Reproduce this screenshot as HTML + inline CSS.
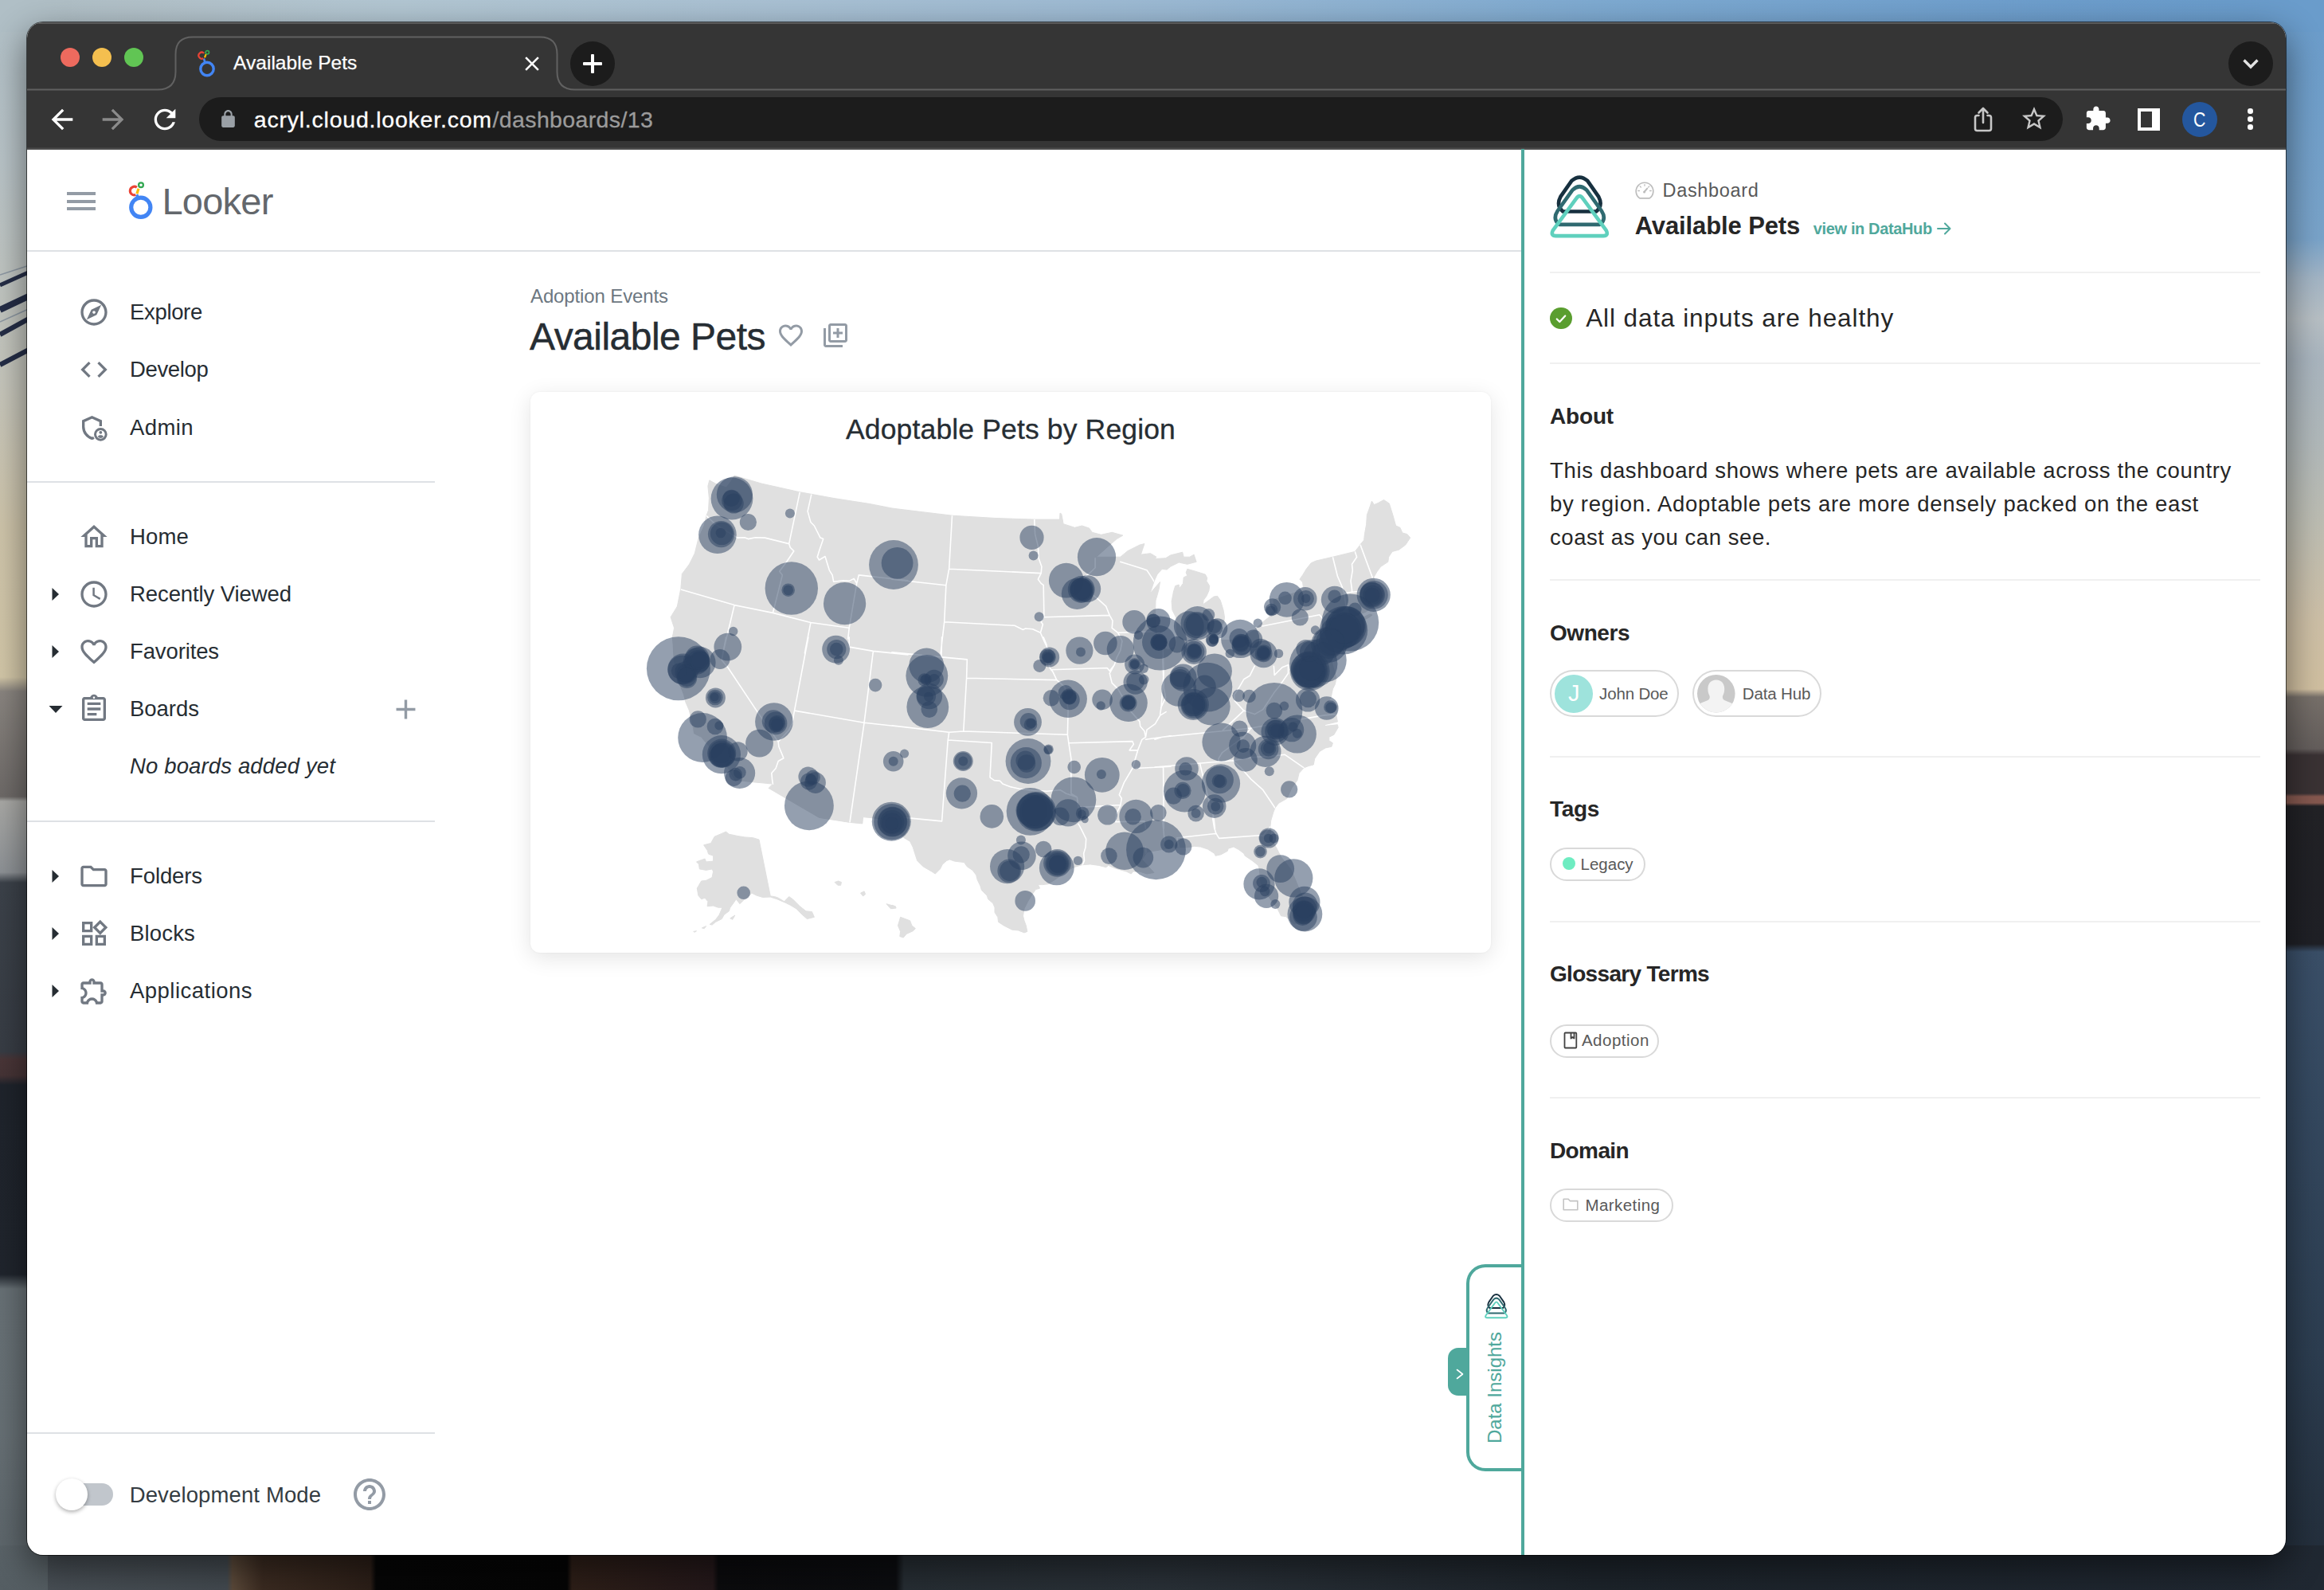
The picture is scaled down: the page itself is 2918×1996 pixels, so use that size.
<!DOCTYPE html>
<html lang="en"><head><meta charset="utf-8"><title>Available Pets</title>
<style>
*{box-sizing:border-box}
html,body{margin:0;padding:0}
body{width:2918px;height:1996px;overflow:hidden;position:relative;background:#3b4650;font-family:"Liberation Sans",sans-serif}
.t{position:absolute;white-space:nowrap;line-height:1;font-family:"Liberation Sans",sans-serif}
.i{position:absolute;display:block;overflow:visible}
.a{position:absolute}
#win{position:absolute;left:34px;top:28px;width:2836px;height:1924px;border-radius:20px;background:#fff;overflow:hidden}
#pg{position:absolute;left:-34px;top:-28px;width:2918px;height:1996px}

.hl{position:absolute;height:2px;background:#dee1e5}
.pl{position:absolute;height:2px;background:#f0f0f0}
.pill{position:absolute;border:2px solid #d9d9d9;border-radius:40px;background:#fff}
#t1{letter-spacing:0.042px}
#t2{letter-spacing:0.775px}
#t3{letter-spacing:0.358px}
#t5{letter-spacing:-0.786px}
#t6{letter-spacing:-0.336px}
#t7{letter-spacing:-0.344px}
#t8{letter-spacing:0.409px}
#t9{letter-spacing:0.160px}
#t10{letter-spacing:-0.090px}
#t11{letter-spacing:-0.122px}
#t12{letter-spacing:-0.023px}
#t13{letter-spacing:-0.100px}
#t14{letter-spacing:0.167px}
#t15{letter-spacing:0.475px}
#t16{letter-spacing:0.141px}
#t17{letter-spacing:0.127px}
#t18{letter-spacing:-0.120px}
#t19{letter-spacing:-0.522px}
#t20{letter-spacing:0.145px}
#t21{letter-spacing:0.670px}
#t22{letter-spacing:-0.113px}
#t23{letter-spacing:-0.366px}
#t24{letter-spacing:0.908px}
#t25{letter-spacing:-0.172px}
#t26{letter-spacing:0.668px}
#t27{letter-spacing:0.729px}
#t28{letter-spacing:0.571px}
#t29{letter-spacing:-0.451px}
#t31{letter-spacing:-0.158px}
#t32{letter-spacing:-0.139px}
#t33{letter-spacing:-0.320px}
#t34{letter-spacing:-0.018px}
#t35{letter-spacing:-0.685px}
#t36{letter-spacing:0.508px}
#t37{letter-spacing:-0.615px}
#t38{letter-spacing:0.443px}

</style></head>
<body>

<div class="a" style="left:0;top:0;width:2918px;height:80px;background:linear-gradient(90deg,#b4c2c9 0.00%,#b2c6d2 17.14%,#a8c0d3 34.27%,#9bb9d3 50.03%,#7eaad1 68.54%,#6f9fcd 85.68%,#699bca 100.00%)"></div>
<div class="a" style="left:0;top:0;width:90px;height:1996px;background:linear-gradient(180deg,#b0bfc6 0.00%,#b9c4c8 10.02%,#c6c6bc 24.05%,#cfc5ab 33.07%,#d3c7a8 42.59%,#8a8580 43.49%,#6e6a68 50.10%,#a9a9a6 50.40%,#8e9296 54.86%,#3c424a 55.51%,#383d45 66.13%,#4a3638 66.63%,#463436 67.64%,#1f242c 68.24%,#20252d 80.16%,#687176 81.06%,#677075 90.18%,#5a6368 100.00%)"></div>
<div class="a" style="left:0;top:0;width:400px;height:40px;background:linear-gradient(90deg,#b0bfc6 0%,#b0bfc6 10%,rgba(178,194,202,0) 100%)"></div>
<svg class="i" style="left:0;top:320px" width="40" height="160" viewBox="0 320 40 160" fill="none" stroke="#252e47" stroke-linecap="butt"><path d="M0 358 L40 340" stroke-width="5"/><path d="M0 389 L40 370" stroke-width="8"/><path d="M0 420 L40 398" stroke-width="6"/><path d="M0 458 L40 437" stroke-width="6"/><path d="M0 345 L40 332 M0 404 L40 386" stroke="#8d98a3" stroke-width="1.500"/></svg>
<div class="a" style="left:2830px;top:0;width:88px;height:1996px;background:linear-gradient(180deg,#6a9ccb 0.00%,#79a3c9 15.03%,#a3b5c5 17.54%,#b7bfc4 20.04%,#a9b5bf 22.55%,#b0b8ba 27.56%,#bdbdb2 33.07%,#cdbfa6 39.08%,#d0bfa0 43.34%,#77706a 43.84%,#645e5c 47.09%,#3a3234 47.49%,#3a3234 49.90%,#85584f 50.10%,#85584f 50.50%,#222226 50.70%,#1f2026 59.37%,#3a4f68 59.87%,#34485f 70.14%,#2c3d50 85.17%,#222c38 100.00%)"></div>
<div class="a" style="left:2500px;top:0;width:418px;height:40px;background:linear-gradient(90deg,rgba(106,156,203,0) 0%,#6a9ccb 85%)"></div>
<div class="a" style="left:0;top:1940px;width:2918px;height:56px;background:linear-gradient(90deg,#4a5157 0.00%,#434a50 9.77%,#5c4a3a 10.01%,#3b2b21 11.31%,#2c1f18 15.94%,#060606 16.18%,#050505 24.40%,#2e1f18 24.61%,#24181a 30.67%,#0b0b0d 30.91%,#0c0d10 38.55%,#272e34 38.90%,#2a3138 50.03%,#1d242b 68.54%,#202832 100.00%)"></div>
<div class="a" style="left:0;top:1940px;width:60px;height:56px;background:linear-gradient(180deg,#5a6368,#555e63)"></div>
<div class="a" style="left:34px;top:28px;width:2836px;height:1924px;border-radius:20px;box-shadow:0 0 0 1px rgba(0,0,0,.6),0 16px 44px 2px rgba(0,0,0,.48)"></div>

<div id="win"><div id="pg">
<div class="a" style="left:34px;top:28px;width:2836px;height:160px;background:#353535"></div>
<div class="a" style="left:34px;top:28px;width:2836px;height:2px;background:#5e5e5e;opacity:.9"></div>
<svg class="i" style="left:34px;top:28px" width="2836" height="90" viewBox="34 28 2836 90" fill="none" stroke="#616161" stroke-width="2">
<path d="M34 112.5 H198 Q220.5 112.5 220.5 90 V68 Q220.5 46.5 242 46.5 H678 Q699.500 46.5 699.500 68 V90 Q699.500 112.500 722 112.500 H2870"/></svg>
<div class="a" style="left:76px;top:60px;width:24px;height:24px;border-radius:50%;background:#ed6a5e"></div>
<div class="a" style="left:116px;top:60px;width:24px;height:24px;border-radius:50%;background:#f4bf4f"></div>
<div class="a" style="left:156px;top:60px;width:24px;height:24px;border-radius:50%;background:#61c554"></div>
<svg class="i" style="left:246px;top:62px" width="28" height="36" viewBox="0 0 28 36" fill="none">
<circle cx="14" cy="24.500" r="8.200" stroke="#4285f4" stroke-width="3.400"/>
<path d="M11.600 16.500 L9.800 11.500" stroke="#4285f4" stroke-width="2.600"/>
<path d="M9.300 11.200 A4 4 0 1 1 10.200 4.800" stroke="#ea4335" stroke-width="2.200"/>
<circle cx="14.300" cy="3.800" r="2.200" stroke="#34a853" stroke-width="1.700"/>
<path d="M12.600 6.200 L11 10.400" stroke="#fbbc04" stroke-width="2.200"/>
</svg>
<div id="t1" class="t " style="left:293.0px;top:67.3px;font-size:24.5px;color:#ffffff;-webkit-text-stroke:.25px #fff;">Available Pets</div>
<svg class="i" style="left:653.0px;top:65.3px" width="30" height="30" viewBox="0 0 24 24" fill="#ffffff" ><path d="M19 6.41L17.59 5 12 10.59 6.41 5 5 6.41 10.59 12 5 17.59 6.41 19 12 13.41 17.59 19 19 17.59 13.41 12z"/></svg>
<div class="a" style="left:715.500px;top:52px;width:56px;height:56px;border-radius:50%;background:#1c1c1c"></div>
<div class="a" style="left:731.500px;top:78px;width:24px;height:4px;border-radius:1px;background:#fff"></div>
<div class="a" style="left:741.500px;top:68px;width:4px;height:24px;border-radius:1px;background:#fff"></div>
<div class="a" style="left:2798px;top:52px;width:56px;height:56px;border-radius:50%;background:#1c1c1c"></div>
<svg class="i" style="left:2814px;top:70px" width="24" height="20" viewBox="0 0 24 20" fill="none" stroke="#e3e3e3" stroke-width="3.400"><path d="M3.500 5.500 L12 14 L20.500 5.500"/></svg>
<svg class="i" style="left:58.0px;top:129.5px" width="40" height="40" viewBox="0 0 24 24" fill="#ffffff" ><path d="M20 11H7.83l5.59-5.59L12 4l-8 8 8 8 1.41-1.41L7.83 13H20v-2z"/></svg>
<svg class="i" style="left:122.0px;top:129.5px" width="40" height="40" viewBox="0 0 24 24" fill="#8b8b8b" ><path d="M12 4l-1.41 1.41L16.17 11H4v2h12.170l-5.580 5.590L12 20l8-8z"/></svg>
<svg class="i" style="left:186.5px;top:129.5px" width="40" height="40" viewBox="0 0 24 24" fill="#ffffff" ><path d="M17.65 6.35C16.2 4.9 14.21 4 12 4c-4.42 0-7.99 3.58-7.990 8s3.570 8 7.990 8c3.730 0 6.840-2.550 7.730-6h-2.080c-.82 2.330-3.040 4-5.650 4-3.310 0-6-2.690-6-6s2.690-6 6-6c1.660 0 3.140.69 4.220 1.780L13 11h7V4l-2.350 2.350z"/></svg>
<div class="a" style="left:250px;top:122px;width:2340px;height:55px;border-radius:28px;background:#1c1c1c"></div>
<svg class="i" style="left:273.5px;top:137.0px" width="25" height="25" viewBox="0 0 24 24" fill="#9aa0a6" ><path d="M18 8h-1V6c0-2.760-2.240-5-5-5S7 3.240 7 6v2H6c-1.100 0-2 .9-2 2v10c0 1.100.9 2 2 2h12c1.100 0 2-.9 2-2V10c0-1.100-.9-2-2-2zM9 6c0-1.660 1.340-3 3-3s3 1.340 3 3v2H9V6z"/></svg>
<div id="t2" class="t " style="left:318.8px;top:136.2px;font-size:28.5px;color:#ffffff;-webkit-text-stroke:.3px #fff;">acryl.cloud.looker.com</div>
<div id="t3" class="t " style="left:618.6px;top:136.2px;font-size:28.5px;color:#9b9b9b;-webkit-text-stroke:.3px #9b9b9b;">/dashboards/13</div>
<svg class="i" style="left:2474px;top:130px" width="32" height="40" viewBox="0 0 32 40" fill="none" stroke="#c7c7c7" stroke-width="2.600" stroke-linecap="round" stroke-linejoin="round">
<path d="M10.500 15 H8.500 Q6 15 6 17.500 V31.500 Q6 34 8.500 34 H23.500 Q26 34 26 31.500 V17.500 Q26 15 23.500 15 H21.500"/><path d="M16 24 V6.500 M10.500 11.500 L16 6 L21.500 11.500"/></svg>
<svg class="i" style="left:2535.8px;top:131.0px" width="36" height="36" viewBox="0 0 24 24" fill="#c7c7c7" ><path d="M22 9.24l-7.19-.62L12 2 9.19 8.63 2 9.24l5.46 4.73L5.82 21 12 17.27 18.18 21l-1.63-7.03L22 9.24zM12 15.4l-3.76 2.27 1-4.28-3.32-2.88 4.38-.38L12 6.1l1.71 4.04 4.38.38-3.320 2.880 1 4.280L12 15.400z"/></svg>
<svg class="i" style="left:2617.0px;top:132.0px" width="34" height="34" viewBox="0 0 24 24" fill="#ffffff" ><path d="M20.5 11H19V7c0-1.1-.9-2-2-2h-4V3.5C13 2.12 11.88 1 10.5 1S8 2.12 8 3.500V5H4c-1.100 0-1.990.9-1.990 2v3.800H3.500c1.490 0 2.700 1.210 2.700 2.700s-1.210 2.700-2.700 2.700H2V20c0 1.100.9 2 2 2h3.800v-1.500c0-1.490 1.210-2.700 2.700-2.700 1.490 0 2.700 1.210 2.700 2.700V22H17c1.100 0 2-.9 2-2v-4h1.500c1.380 0 2.500-1.120 2.500-2.500S21.880 11 20.500 11z"/></svg>
<div class="a" style="left:2684px;top:135.500px;width:28px;height:28px;background:#fff"></div>
<div class="a" style="left:2688px;top:139.500px;width:14px;height:20px;background:#353535"></div>
<div class="a" style="left:2740px;top:127.500px;width:44px;height:44px;border-radius:50%;background:#24579e"></div>
<div id="t4" class="t " style="left:2753.6px;top:137.4px;font-size:26px;color:#ffffff;transform:scaleX(.82);transform-origin:0 50%;">C</div>
<div class="a" style="left:2822.300px;top:136.3px;width:6.500px;height:6.500px;border-radius:50%;background:#fff"></div>
<div class="a" style="left:2822.300px;top:146.3px;width:6.500px;height:6.500px;border-radius:50%;background:#fff"></div>
<div class="a" style="left:2822.300px;top:156.3px;width:6.500px;height:6.500px;border-radius:50%;background:#fff"></div>
<div class="a" style="left:34px;top:185px;width:2836px;height:3px;background:linear-gradient(180deg,#3c3c3c,#5a5a5a)"></div>
<div class="a" style="left:84px;top:241px;width:36px;height:4px;background:#939ba5"></div>
<div class="a" style="left:84px;top:250.5px;width:36px;height:4px;background:#939ba5"></div>
<div class="a" style="left:84px;top:260px;width:36px;height:4px;background:#939ba5"></div>
<svg class="i" style="left:158px;top:225px" width="38" height="54" viewBox="158 225 38 54" fill="none">
<circle cx="176.800" cy="260.300" r="12.100" stroke="#4285f4" stroke-width="5.200"/>
<path d="M173.700 248.800 L171.600 244.200" stroke="#4285f4" stroke-width="3.600"/>
<path d="M170.300 244.600 A5.300 5.300 0 1 1 171.800 235.300" stroke="#ea4335" stroke-width="3.200"/>
<circle cx="177" cy="232.200" r="2.900" stroke="#34a853" stroke-width="2.300"/>
<path d="M174 236.800 L171.900 243.300" stroke="#fbbc04" stroke-width="3.200"/>
</svg>
<div id="t5" class="t " style="left:203.5px;top:228.7px;font-size:47px;color:#63676c;">Looker</div>
<div class="hl" style="left:34px;top:314px;width:1876px"></div>
<div class="hl" style="left:34px;top:604px;width:512px"></div>
<div class="hl" style="left:34px;top:1030px;width:512px"></div>
<div class="hl" style="left:34px;top:1798px;width:512px"></div>
<svg class="i" style="left:98.0px;top:371.5px" width="40" height="40" viewBox="0 0 24 24" fill="#717882" ><path d="M12 2C6.48 2 2 6.48 2 12s4.48 10 10 10 10-4.48 10-10S17.52 2 12 2zm0 18c-4.41 0-8-3.59-8-8s3.59-8 8-8 8 3.59 8 8-3.59 8-8 8zm-5.5-2.500l7.510-3.490L17.500 6.500 9.990 9.990 6.500 17.500zm5.500-6.600c.61 0 1.100.49 1.100 1.100s-.49 1.100-1.100 1.100-1.100-.49-1.100-1.100.49-1.100 1.100-1.100z"/></svg>
<div id="t6" class="t " style="left:163.0px;top:377.8px;font-size:27.5px;color:#262d33;">Explore</div>
<svg class="i" style="left:98.0px;top:444.0px" width="40" height="40" viewBox="0 0 24 24" fill="#717882" ><path d="M9.4 16.6L4.8 12l4.600-4.600L8 6l-6 6 6 6 1.400-1.400zm5.200 0l4.600-4.600-4.600-4.600L16 6l6 6-6 6-1.400-1.400z"/></svg>
<div id="t7" class="t " style="left:163.0px;top:450.3px;font-size:27.5px;color:#262d33;">Develop</div>
<svg class="i" style="left:98px;top:516.5px" width="40" height="40" viewBox="0 0 24 24" fill="#717882"><path d="M17 10.800 V7 L10.500 4.100 L4 7 V11.200 C4 15.200 6.700 18.900 10.500 20 C11 19.850 11.500 19.650 11.950 19.400" fill="none" stroke="#717882" stroke-width="2" stroke-linejoin="miter"/><circle cx="17" cy="17" r="4.100" fill="#fff" stroke="#717882" stroke-width="1.800"/><circle cx="17" cy="15.500" r="1.150"/><path d="M14.800 18.600c.5-.9 1.500-1.100 2.200-1.100s1.700.2 2.200 1.100c-.5.700-1.300 1.150-2.200 1.150s-1.700-.45-2.200-1.150z"/></svg>
<div id="t8" class="t " style="left:163.0px;top:522.8px;font-size:27.5px;color:#262d33;">Admin</div>
<svg class="i" style="left:98.0px;top:653.5px" width="40" height="40" viewBox="0 0 24 24" fill="#717882" ><path d="M12 5.69l5 4.500V18h-2v-6H9v6H7v-7.810l5-4.500M12 3L2 12h3v8h6v-6h2v6h6v-8h3L12 3z"/></svg>
<div id="t9" class="t " style="left:163.0px;top:659.8px;font-size:27.5px;color:#262d33;">Home</div>
<svg class="i" style="left:98.0px;top:726.0px" width="40" height="40" viewBox="0 0 24 24" fill="#717882" ><path d="M11.99 2C6.47 2 2 6.48 2 12s4.470 10 9.990 10C17.520 22 22 17.520 22 12S17.520 2 11.990 2zM12 20c-4.420 0-8-3.580-8-8s3.580-8 8-8 8 3.580 8 8-3.580 8-8 8zm.5-13H11v6l5.250 3.150.75-1.230-4.500-2.670z"/></svg>
<div id="t10" class="t " style="left:163.0px;top:732.3px;font-size:27.5px;color:#262d33;">Recently Viewed</div>
<svg class="i" style="left:64px;top:737px" width="12" height="18" viewBox="0 0 12 18" fill="#262d33"><path d="M1.500 1 L10 9 L1.500 17z"/></svg>
<svg class="i" style="left:98.0px;top:798.0px" width="40" height="40" viewBox="0 0 24 24" fill="#717882" ><path d="M16.5 3c-1.740 0-3.410.81-4.500 2.090C10.910 3.810 9.240 3 7.500 3 4.420 3 2 5.420 2 8.500c0 3.780 3.400 6.860 8.550 11.540L12 21.350l1.450-1.320C18.600 15.360 22 12.280 22 8.500 22 5.420 19.580 3 16.500 3zm-4.400 15.550l-.1.1-.1-.1C7.140 14.240 4 11.390 4 8.500 4 6.500 5.500 5 7.500 5c1.540 0 3.040.99 3.570 2.360h1.870C13.460 5.990 14.960 5 16.500 5c2 0 3.500 1.500 3.500 3.500 0 2.890-3.140 5.740-7.900 10.050z"/></svg>
<div id="t11" class="t " style="left:163.0px;top:804.3px;font-size:27.5px;color:#262d33;">Favorites</div>
<svg class="i" style="left:64px;top:809px" width="12" height="18" viewBox="0 0 12 18" fill="#262d33"><path d="M1.500 1 L10 9 L1.500 17z"/></svg>
<svg class="i" style="left:98.0px;top:870.0px" width="40" height="40" viewBox="0 0 24 24" fill="#717882" ><path d="M7 15h7v2H7zm0-4h10v2H7zm0-4h10v2H7zm12-4h-4.180C14.400 1.840 13.300 1 12 1c-1.300 0-2.400.84-2.820 2H5c-.14 0-.27.01-.4.04-.39.08-.74.28-1.010.55-.18.18-.33.4-.43.64-.1.23-.16.49-.16.77v14c0 .27.06.54.16.78s.25.45.43.64c.27.27.62.47 1.010.55.13.02.26.03.4.03h14c1.100 0 2-.9 2-2V5c0-1.100-.9-2-2-2zm-7-.25c.41 0 .75.34.75.75s-.34.75-.75.75-.75-.34-.75-.75.34-.75.75-.75zM19 19H5V5h14v14z"/></svg>
<div id="t12" class="t " style="left:163.0px;top:876.3px;font-size:27.5px;color:#262d33;">Boards</div>
<svg class="i" style="left:61px;top:885px" width="18" height="11" viewBox="0 0 18 11" fill="#262d33"><path d="M0.500 1 L17.500 1 L9 10z"/></svg>
<svg class="i" style="left:98.0px;top:1080.0px" width="40" height="40" viewBox="0 0 24 24" fill="#717882" ><path d="M9.17 6l2 2H20v10H4V6h5.170M10 4H4c-1.100 0-1.990.9-1.990 2L2 18c0 1.100.9 2 2 2h16c1.100 0 2-.9 2-2V8c0-1.100-.9-2-2-2h-8l-2-2z"/></svg>
<div id="t13" class="t " style="left:163.0px;top:1086.3px;font-size:27.5px;color:#262d33;">Folders</div>
<svg class="i" style="left:64px;top:1091px" width="12" height="18" viewBox="0 0 12 18" fill="#262d33"><path d="M1.500 1 L10 9 L1.500 17z"/></svg>
<svg class="i" style="left:98.0px;top:1152.0px" width="40" height="40" viewBox="0 0 24 24" fill="#717882" ><path d="M16.66 4.52l2.830 2.830-2.830 2.830-2.830-2.830 2.830-2.830M9 5v4H5V5h4m10 10v4h-4v-4h4M9 15v4H5v-4h4m7.660-13.310L11 7.340 16.660 13l5.660-5.660-5.660-5.650zM11 3H3v8h8V3zm10 10h-8v8h8v-8zm-10 0H3v8h8v-8z"/></svg>
<div id="t14" class="t " style="left:163.0px;top:1158.3px;font-size:27.5px;color:#262d33;">Blocks</div>
<svg class="i" style="left:64px;top:1163px" width="12" height="18" viewBox="0 0 12 18" fill="#262d33"><path d="M1.500 1 L10 9 L1.500 17z"/></svg>
<svg class="i" style="left:98.0px;top:1224.0px" width="40" height="40" viewBox="0 0 24 24" fill="#717882" ><path d="M10.5 4.5c.28 0 .5.22.5.5v2h6v6h2c.28 0 .5.22.5.5s-.22.5-.5.5h-2v6h-2.120c-.68-1.750-2.390-3-4.380-3s-3.700 1.250-4.380 3H4v-2.120c1.750-.68 3-2.390 3-4.380 0-1.990-1.240-3.700-2.990-4.380L4 7h6V5c0-.28.22-.5.5-.5m0-2C9.120 2.500 8 3.620 8 5H4c-1.100 0-1.990.9-1.990 2v3.800h.29c1.490 0 2.700 1.210 2.700 2.700s-1.210 2.700-2.700 2.700H2V20c0 1.100.9 2 2 2h3.800v-.3c0-1.490 1.210-2.700 2.700-2.700s2.700 1.210 2.700 2.700v.3H17c1.100 0 2-.9 2-2v-4c1.380 0 2.500-1.120 2.500-2.500S20.380 11 19 11V7c0-1.100-.9-2-2-2h-4c0-1.380-1.120-2.500-2.500-2.500z"/></svg>
<div id="t15" class="t " style="left:163.0px;top:1230.3px;font-size:27.5px;color:#262d33;">Applications</div>
<svg class="i" style="left:64px;top:1235px" width="12" height="18" viewBox="0 0 12 18" fill="#262d33"><path d="M1.500 1 L10 9 L1.500 17z"/></svg>
<svg class="i" style="left:489.1px;top:869.5px" width="41" height="41" viewBox="0 0 24 24" fill="#939ba5" ><path d="M19 13h-6v6h-2v-6H5v-2h6V5h2v6h6v2z"/></svg>
<div id="t16" class="t " style="left:163.0px;top:947.7px;font-size:27.5px;color:#262d33;font-style:italic;">No boards added yet</div>
<div class="a" style="left:88px;top:1862px;width:54px;height:28px;border-radius:14px;background:#c1c6cc"></div>
<div class="a" style="left:70px;top:1856px;width:40px;height:40px;border-radius:50%;background:#fff;box-shadow:0 2px 5px rgba(0,0,0,.32)"></div>
<div id="t17" class="t " style="left:162.7px;top:1862.7px;font-size:27.5px;color:#343c42;">Development Mode</div>
<svg class="i" style="left:440.0px;top:1852.0px" width="48" height="48" viewBox="0 0 24 24" fill="#939ba5" ><path d="M11 18h2v-2h-2v2zm1-16C6.480 2 2 6.480 2 12s4.480 10 10 10 10-4.480 10-10S17.520 2 12 2zm0 18c-4.410 0-8-3.590-8-8s3.590-8 8-8 8 3.590 8 8-3.590 8-8 8zm0-14c-2.210 0-4 1.790-4 4h2c0-1.100.9-2 2-2s2 .9 2 2c0 2-3 1.750-3 5h2c0-2.250 3-2.500 3-5 0-2.210-1.790-4-4-4z"/></svg>
<div id="t18" class="t " style="left:666.0px;top:359.7px;font-size:24px;color:#6c7781;">Adoption Events</div>
<div id="t19" class="t " style="left:665.0px;top:398.7px;font-size:48px;color:#262d33;-webkit-text-stroke:.45px #262d33;">Available Pets</div>
<svg class="i" style="left:974.8px;top:403.0px" width="36" height="36" viewBox="0 0 24 24" fill="#939ba5" ><path d="M16.5 3c-1.740 0-3.410.81-4.500 2.090C10.910 3.810 9.240 3 7.500 3 4.420 3 2 5.420 2 8.500c0 3.780 3.400 6.860 8.550 11.540L12 21.350l1.450-1.320C18.600 15.360 22 12.280 22 8.500 22 5.420 19.580 3 16.500 3zm-4.400 15.550l-.1.1-.1-.1C7.140 14.240 4 11.390 4 8.500 4 6.500 5.500 5 7.500 5c1.540 0 3.040.99 3.570 2.360h1.870C13.460 5.990 14.960 5 16.500 5c2 0 3.500 1.500 3.500 3.500 0 2.890-3.140 5.740-7.900 10.050z"/></svg>
<svg class="i" style="left:1031.0px;top:402.5px" width="36" height="36" viewBox="0 0 24 24" fill="#939ba5" ><path d="M4 6H2v14c0 1.100.9 2 2 2h14v-2H4V6zm16-4H8c-1.100 0-2 .9-2 2v12c0 1.100.9 2 2 2h12c1.100 0 2-.9 2-2V4c0-1.100-.9-2-2-2zm0 14H8V4h12v12zm-7-2h2v-3h3V9h-3V6h-2v3h-3v2h3z"/></svg>
<div class="a" style="left:666px;top:492px;width:1206px;height:703.500px;border-radius:12px;background:#fff;box-shadow:0 6px 28px rgba(0,0,0,.11),0 0 3px rgba(0,0,0,.05)"></div>
<div id="t20" class="t " style="left:1062.0px;top:522.3px;font-size:35.5px;color:#262d33;-webkit-text-stroke:.3px #262d33;">Adoptable Pets by Region</div>
<svg class="i" style="left:780px;top:585px" width="1010" height="605" viewBox="780 585 1010 605">
<path d="M922.0 597.0 L956.0 607.0 L1003.0 617.5 L1047.0 625.5 L1092.0 632.5 L1120.0 638.0 L1140.0 640.5 L1195.5 647.2 L1250.0 650.5 L1299.0 652.1 L1330.5 652.1 L1331.0 644.1 L1332.8 645.2 L1335.1 657.7 L1349.4 662.3 L1358.5 660.0 L1367.5 663.0 L1371.3 668.3 L1382.6 671.3 L1396.2 668.3 L1409.8 672.1 L1402.2 676.6 L1391.7 685.6 L1376.6 699.2 L1396.2 699.2 L1406.8 699.2 L1415.8 691.7 L1430.9 684.1 L1436.9 682.6 L1432.4 696.2 L1444.5 694.7 L1452.0 699.2 L1450.0 701.5 L1463.6 700.7 L1469.6 697.0 L1484.7 693.2 L1486.2 699.2 L1493.8 699.2 L1499.1 696.2 L1502.1 705.3 L1490.8 708.3 L1480.2 706.0 L1469.6 711.3 L1465.1 715.1 L1459.1 714.3 L1453.0 721.0 L1449.0 730.0 L1444.0 745.0 L1450.0 738.0 L1456.5 730.5 L1455.0 740.0 L1451.0 754.0 L1450.5 776.0 L1452.0 793.0 L1456.0 806.0 L1461.0 813.0 L1467.0 816.0 L1474.0 812.0 L1478.0 800.0 L1477.2 776.2 L1471.9 765.7 L1471.1 755.1 L1473.4 743.0 L1475.7 735.5 L1480.2 734.0 L1480.9 738.5 L1485.5 732.4 L1486.2 724.9 L1490.8 722.6 L1489.2 718.9 L1490.8 714.3 L1501.3 717.3 L1513.4 721.1 L1515.7 725.6 L1514.9 729.4 L1518.7 735.5 L1517.9 741.5 L1514.9 748.3 L1511.1 753.6 L1510.4 758.9 L1517.9 753.6 L1524.0 749.0 L1528.5 748.3 L1532.3 753.6 L1536.0 765.7 L1537.5 774.7 L1536.8 780.7 L1531.0 790.0 L1523.0 800.0 L1535.0 803.5 L1550.0 803.5 L1562.0 799.0 L1575.0 791.0 L1585.8 780.7 L1593.4 774.7 L1600.0 764.0 L1599.0 753.0 L1608.0 750.0 L1620.0 746.0 L1633.0 742.0 L1636.4 737.0 L1635.6 730.9 L1631.9 727.2 L1635.6 721.9 L1640.2 714.3 L1646.2 706.8 L1652.2 704.1 L1673.4 699.2 L1701.3 692.4 L1706.6 685.6 L1708.1 683.4 L1712.6 678.1 L1713.4 670.6 L1715.6 658.5 L1716.4 646.4 L1720.2 635.8 L1722.4 629.1 L1725.4 633.6 L1730.7 631.3 L1737.5 627.5 L1744.3 632.1 L1748.8 646.4 L1752.6 660.0 L1757.9 662.3 L1760.9 669.0 L1766.9 670.6 L1770.7 675.1 L1764.7 684.1 L1756.4 690.2 L1748.1 692.4 L1743.6 699.2 L1742.8 705.3 L1733.7 711.3 L1729.2 717.3 L1724.7 724.9 L1728.0 733.0 L1725.0 742.0 L1730.0 750.0 L1736.0 755.0 L1728.0 760.0 L1722.0 763.0 L1715.0 768.0 L1700.0 774.0 L1692.0 779.0 L1690.0 790.0 L1688.0 800.0 L1683.0 815.0 L1676.0 827.0 L1670.0 818.0 L1672.0 830.0 L1677.9 851.3 L1676.4 858.9 L1673.4 864.9 L1671.1 875.5 L1668.0 881.0 L1679.4 886.0 L1677.9 898.1 L1679.4 906.0 L1664.0 909.5 L1663.0 911.5 L1679.4 909.8 L1680.2 913.2 L1674.9 922.3 L1668.8 925.3 L1668.8 929.8 L1673.4 932.8 L1671.9 937.3 L1664.3 938.9 L1656.8 943.4 L1650.7 952.4 L1649.2 960.0 L1643.2 961.5 L1637.2 963.8 L1631.1 970.6 L1628.9 979.6 L1622.0 989.0 L1616.0 1002.3 L1605.5 1008.3 L1600.9 1014.3 L1598.7 1020.0 L1595.6 1030.6 L1594.9 1038.1 L1596.0 1052.0 L1602.4 1063.8 L1608.5 1075.8 L1620.5 1090.9 L1626.6 1104.5 L1633.0 1120.0 L1640.0 1135.0 L1641.0 1148.0 L1636.0 1158.0 L1625.0 1160.0 L1614.5 1150.6 L1608.5 1149.8 L1604.0 1140.7 L1594.9 1128.7 L1588.0 1118.0 L1583.0 1108.0 L1581.3 1090.9 L1579.8 1086.4 L1572.3 1080.4 L1563.2 1074.3 L1561.7 1071.3 L1555.7 1066.8 L1548.9 1063.0 L1542.1 1065.3 L1541.3 1068.3 L1533.0 1072.8 L1526.2 1074.3 L1524.7 1071.3 L1516.4 1066.0 L1507.4 1063.0 L1499.8 1062.3 L1490.8 1063.8 L1480.2 1063.8 L1470.0 1064.0 L1462.0 1066.0 L1450.0 1068.0 L1440.0 1070.0 L1434.0 1079.0 L1449.0 1095.5 L1440.0 1097.0 L1430.9 1094.0 L1422.6 1094.0 L1420.3 1097.0 L1414.3 1094.0 L1400.0 1090.0 L1391.7 1086.4 L1388.7 1088.7 L1379.6 1086.4 L1369.0 1084.9 L1358.5 1085.7 L1346.4 1089.4 L1335.0 1097.0 L1325.0 1104.0 L1316.2 1109.8 L1308.7 1110.6 L1303.4 1110.6 L1305.6 1115.1 L1300.4 1116.6 L1295.1 1124.1 L1290.5 1131.7 L1286.0 1140.7 L1284.5 1149.8 L1286.0 1155.8 L1288.3 1161.9 L1289.8 1169.4 L1286.0 1170.9 L1278.5 1167.9 L1270.9 1167.2 L1260.4 1161.9 L1253.6 1157.4 L1252.8 1151.3 L1249.0 1145.3 L1249.0 1139.2 L1246.8 1134.0 L1240.7 1128.7 L1239.2 1124.1 L1232.4 1117.4 L1230.9 1112.1 L1227.2 1104.5 L1225.7 1098.5 L1221.1 1092.4 L1214.3 1087.9 L1210.6 1082.6 L1198.5 1081.1 L1192.4 1078.9 L1188.7 1080.4 L1183.4 1084.9 L1180.4 1090.9 L1174.3 1097.0 L1169.8 1094.0 L1159.2 1087.9 L1151.7 1080.4 L1148.7 1071.3 L1146.4 1063.8 L1142.6 1056.2 L1135.1 1051.7 L1126.0 1043.0 L1117.0 1029.0 L1083.6 1025.6 L1082.8 1033.9 L1067.0 1032.4 L1028.5 1026.4 L965.1 989.4 L970.4 984.1 L947.0 981.9 L933.4 980.4 L922.8 979.6 L915.0 965.0 L905.0 952.0 L893.0 940.0 L880.6 925.3 L871.5 920.7 L870.7 914.7 L865.5 892.1 L860.9 881.5 L858.7 872.4 L852.0 855.0 L848.0 840.0 L846.0 825.0 L845.1 809.1 L844.3 800.0 L846.6 788.3 L842.1 774.7 L850.4 761.1 L854.9 738.5 L856.4 720.4 L865.5 708.3 L872.3 694.7 L876.8 676.6 L884.0 660.0 L887.3 646.4 L889.6 640.4 L890.4 625.3 L888.9 610.2 L890.8 602.9 L900.0 608.0 L912.0 612.0 L918.0 604.0Z M1692.0 784.0 L1705.0 778.0 L1720.0 771.0 L1723.0 772.0 L1719.0 775.0 L1705.0 782.0 L1695.0 787.0Z M883.6 1060.8 L892.6 1058.5 L897.2 1050.2 L906.2 1046.4 L911.5 1044.1 L915.3 1047.2 L925.8 1049.4 L934.9 1050.9 L945.5 1051.7 L953.0 1054.0 L967.3 1124.9 L972.6 1125.6 L977.2 1127.2 L984.7 1131.7 L990.7 1125.6 L995.3 1128.7 L1004.3 1137.7 L1011.9 1143.8 L1019.4 1144.5 L1022.4 1151.3 L1013.4 1153.6 L1007.3 1148.3 L999.8 1140.7 L992.2 1136.2 L986.2 1133.2 L975.6 1128.7 L967.3 1126.0 L957.5 1126.4 L950.0 1124.1 L943.9 1121.1 L939.4 1125.6 L933.4 1130.2 L928.9 1134.7 L924.3 1128.7 L921.3 1133.2 L916.8 1139.2 L915.3 1143.8 L909.2 1148.3 L906.2 1153.6 L898.7 1157.3 L894.1 1161.1 L891.1 1160.4 L898.7 1154.3 L903.2 1148.3 L907.0 1139.2 L901.7 1139.2 L895.6 1137.0 L888.1 1137.7 L888.9 1131.7 L885.1 1127.2 L880.6 1128.7 L876.8 1124.1 L875.3 1115.1 L880.6 1106.0 L886.6 1105.3 L894.1 1101.5 L895.6 1094.0 L894.1 1090.9 L886.6 1092.4 L878.3 1090.9 L877.5 1084.9 L874.5 1081.9 L880.6 1079.6 L885.1 1078.1 L886.6 1081.9 L895.6 1081.1 L895.6 1074.3 L889.6 1072.1 L888.1 1067.5Z M1130.6 1151.3 L1142.6 1155.8 L1144.9 1161.9 L1149.4 1165.6 L1146.4 1168.7 L1138.1 1172.4 L1134.3 1177.0 L1129.8 1175.5 L1130.6 1169.4 L1127.5 1161.9Z M1048.1 1107.5 L1052.6 1106.0 L1056.4 1107.5 L1055.6 1111.3 L1051.9 1111.3Z M1080.5 1121.1 L1085.1 1118.9 L1086.6 1122.6 L1083.6 1124.9Z M1113.0 1134.7 L1118.3 1136.2 L1124.3 1137.7 L1125.1 1140.0 L1118.3 1140.7Z M1120.0 1136.2 L1124.5 1138.5 L1120.8 1140.7Z M870.7 1169.4 L874.5 1168.7 L872.3 1170.2Z M881.3 1164.9 L886.6 1162.6 L884.3 1165.6Z M916.8 1152.8 L922.8 1149.0 L919.8 1154.3Z" fill="#e0e0e0" stroke="#e0e0e0" stroke-width="1" stroke-linejoin="round"/>
<defs><clipPath id="landclip"><path d="M922.0 597.0 L956.0 607.0 L1003.0 617.5 L1047.0 625.5 L1092.0 632.5 L1120.0 638.0 L1140.0 640.5 L1195.5 647.2 L1250.0 650.5 L1299.0 652.1 L1330.5 652.1 L1331.0 644.1 L1332.8 645.2 L1335.1 657.7 L1349.4 662.3 L1358.5 660.0 L1367.5 663.0 L1371.3 668.3 L1382.6 671.3 L1396.2 668.3 L1409.8 672.1 L1402.2 676.6 L1391.7 685.6 L1376.6 699.2 L1396.2 699.2 L1406.8 699.2 L1415.8 691.7 L1430.9 684.1 L1436.9 682.6 L1432.4 696.2 L1444.5 694.7 L1452.0 699.2 L1450.0 701.5 L1463.6 700.7 L1469.6 697.0 L1484.7 693.2 L1486.2 699.2 L1493.8 699.2 L1499.1 696.2 L1502.1 705.3 L1490.8 708.3 L1480.2 706.0 L1469.6 711.3 L1465.1 715.1 L1459.1 714.3 L1453.0 721.0 L1449.0 730.0 L1444.0 745.0 L1450.0 738.0 L1456.5 730.5 L1455.0 740.0 L1451.0 754.0 L1450.5 776.0 L1452.0 793.0 L1456.0 806.0 L1461.0 813.0 L1467.0 816.0 L1474.0 812.0 L1478.0 800.0 L1477.2 776.2 L1471.9 765.7 L1471.1 755.1 L1473.4 743.0 L1475.7 735.5 L1480.2 734.0 L1480.9 738.5 L1485.5 732.4 L1486.2 724.9 L1490.8 722.6 L1489.2 718.9 L1490.8 714.3 L1501.3 717.3 L1513.4 721.1 L1515.7 725.6 L1514.9 729.4 L1518.7 735.5 L1517.9 741.5 L1514.9 748.3 L1511.1 753.6 L1510.4 758.9 L1517.9 753.6 L1524.0 749.0 L1528.5 748.3 L1532.3 753.6 L1536.0 765.7 L1537.5 774.7 L1536.8 780.7 L1531.0 790.0 L1523.0 800.0 L1535.0 803.5 L1550.0 803.5 L1562.0 799.0 L1575.0 791.0 L1585.8 780.7 L1593.4 774.7 L1600.0 764.0 L1599.0 753.0 L1608.0 750.0 L1620.0 746.0 L1633.0 742.0 L1636.4 737.0 L1635.6 730.9 L1631.9 727.2 L1635.6 721.9 L1640.2 714.3 L1646.2 706.8 L1652.2 704.1 L1673.4 699.2 L1701.3 692.4 L1706.6 685.6 L1708.1 683.4 L1712.6 678.1 L1713.4 670.6 L1715.6 658.5 L1716.4 646.4 L1720.2 635.8 L1722.4 629.1 L1725.4 633.6 L1730.7 631.3 L1737.5 627.5 L1744.3 632.1 L1748.8 646.4 L1752.6 660.0 L1757.9 662.3 L1760.9 669.0 L1766.9 670.6 L1770.7 675.1 L1764.7 684.1 L1756.4 690.2 L1748.1 692.4 L1743.6 699.2 L1742.8 705.3 L1733.7 711.3 L1729.2 717.3 L1724.7 724.9 L1728.0 733.0 L1725.0 742.0 L1730.0 750.0 L1736.0 755.0 L1728.0 760.0 L1722.0 763.0 L1715.0 768.0 L1700.0 774.0 L1692.0 779.0 L1690.0 790.0 L1688.0 800.0 L1683.0 815.0 L1676.0 827.0 L1670.0 818.0 L1672.0 830.0 L1677.9 851.3 L1676.4 858.9 L1673.4 864.9 L1671.1 875.5 L1668.0 881.0 L1679.4 886.0 L1677.9 898.1 L1679.4 906.0 L1664.0 909.5 L1663.0 911.5 L1679.4 909.8 L1680.2 913.2 L1674.9 922.3 L1668.8 925.3 L1668.8 929.8 L1673.4 932.8 L1671.9 937.3 L1664.3 938.9 L1656.8 943.4 L1650.7 952.4 L1649.2 960.0 L1643.2 961.5 L1637.2 963.8 L1631.1 970.6 L1628.9 979.6 L1622.0 989.0 L1616.0 1002.3 L1605.5 1008.3 L1600.9 1014.3 L1598.7 1020.0 L1595.6 1030.6 L1594.9 1038.1 L1596.0 1052.0 L1602.4 1063.8 L1608.5 1075.8 L1620.5 1090.9 L1626.6 1104.5 L1633.0 1120.0 L1640.0 1135.0 L1641.0 1148.0 L1636.0 1158.0 L1625.0 1160.0 L1614.5 1150.6 L1608.5 1149.8 L1604.0 1140.7 L1594.9 1128.7 L1588.0 1118.0 L1583.0 1108.0 L1581.3 1090.9 L1579.8 1086.4 L1572.3 1080.4 L1563.2 1074.3 L1561.7 1071.3 L1555.7 1066.8 L1548.9 1063.0 L1542.1 1065.3 L1541.3 1068.3 L1533.0 1072.8 L1526.2 1074.3 L1524.7 1071.3 L1516.4 1066.0 L1507.4 1063.0 L1499.8 1062.3 L1490.8 1063.8 L1480.2 1063.8 L1470.0 1064.0 L1462.0 1066.0 L1450.0 1068.0 L1440.0 1070.0 L1434.0 1079.0 L1449.0 1095.5 L1440.0 1097.0 L1430.9 1094.0 L1422.6 1094.0 L1420.3 1097.0 L1414.3 1094.0 L1400.0 1090.0 L1391.7 1086.4 L1388.7 1088.7 L1379.6 1086.4 L1369.0 1084.9 L1358.5 1085.7 L1346.4 1089.4 L1335.0 1097.0 L1325.0 1104.0 L1316.2 1109.8 L1308.7 1110.6 L1303.4 1110.6 L1305.6 1115.1 L1300.4 1116.6 L1295.1 1124.1 L1290.5 1131.7 L1286.0 1140.7 L1284.5 1149.8 L1286.0 1155.8 L1288.3 1161.9 L1289.8 1169.4 L1286.0 1170.9 L1278.5 1167.9 L1270.9 1167.2 L1260.4 1161.9 L1253.6 1157.4 L1252.8 1151.3 L1249.0 1145.3 L1249.0 1139.2 L1246.8 1134.0 L1240.7 1128.7 L1239.2 1124.1 L1232.4 1117.4 L1230.9 1112.1 L1227.2 1104.5 L1225.7 1098.5 L1221.1 1092.4 L1214.3 1087.9 L1210.6 1082.6 L1198.5 1081.1 L1192.4 1078.9 L1188.7 1080.4 L1183.4 1084.9 L1180.4 1090.9 L1174.3 1097.0 L1169.8 1094.0 L1159.2 1087.9 L1151.7 1080.4 L1148.7 1071.3 L1146.4 1063.8 L1142.6 1056.2 L1135.1 1051.7 L1126.0 1043.0 L1117.0 1029.0 L1083.6 1025.6 L1082.8 1033.9 L1067.0 1032.4 L1028.5 1026.4 L965.1 989.4 L970.4 984.1 L947.0 981.9 L933.4 980.4 L922.8 979.6 L915.0 965.0 L905.0 952.0 L893.0 940.0 L880.6 925.3 L871.5 920.7 L870.7 914.7 L865.5 892.1 L860.9 881.5 L858.7 872.4 L852.0 855.0 L848.0 840.0 L846.0 825.0 L845.1 809.1 L844.3 800.0 L846.6 788.3 L842.1 774.7 L850.4 761.1 L854.9 738.5 L856.4 720.4 L865.5 708.3 L872.3 694.7 L876.8 676.6 L884.0 660.0 L887.3 646.4 L889.6 640.4 L890.4 625.3 L888.9 610.2 L890.8 602.9 L900.0 608.0 L912.0 612.0 L918.0 604.0Z"/></clipPath></defs>
<g clip-path="url(#landclip)"><path d="M887.3 647.9 L898.7 658.5 L925.8 675.1 L934.9 674.8 L939.4 676.6 L948.5 674.8 L960.5 675.1 L990.7 682.6 M1004.3 617.7 L990.7 682.6 M1018.7 621.1 L1014.1 641.9 L1017.9 655.5 L1022.4 660.0 L1030.0 675.1 L1033.7 676.6 L1028.5 691.7 L1026.2 699.2 L1028.5 703.0 L1036.0 698.5 L1041.3 715.8 L1045.1 721.9 L1046.6 730.2 L1058.7 728.7 L1066.2 729.4 L1072.2 726.4 L1075.7 732.4 M990.7 682.6 L992.2 687.2 L996.8 691.7 L987.7 705.3 L978.7 717.3 L982.4 721.9 L970.4 769.4 M854.9 740.0 L922.1 759.6 L970.4 769.4 L1017.9 781.5 L1066.2 788.3 M1078.3 721.9 L1140.0 728.7 M1120.0 727.2 L1187.9 734.7 M1078.3 721.9 L1075.7 732.4 L1066.2 788.3 L1064.7 801.9 M1066.2 800.0 L1066.2 812.1 L1096.4 817.4 L1140.0 821.9 M1120.0 818.9 L1181.9 824.9 L1214.3 827.9 L1213.6 851.3 L1209.8 917.7 M922.1 759.6 L907.7 820.0 M911.5 800.0 L906.2 828.7 L913.8 837.7 L950.0 892.1 L977.2 931.3 L977.9 937.3 L981.7 946.4 L983.9 951.7 L977.2 955.5 L974.1 964.5 L968.8 970.5 L969.6 978.8 L970.4 984.1 M1017.9 781.5 L1010.4 820.0 M1014.9 800.0 L997.5 892.1 L994.5 908.7 L990.7 916.2 L977.2 931.3 M997.5 892.1 L1085.1 907.2 L1140.0 913.2 M1120.0 910.9 L1191.7 919.2 L1209.8 918.0 L1340.4 922.3 M1096.4 817.4 L1085.1 907.2 L1067.0 1032.4 M1195.5 647.2 L1191.7 713.6 L1187.9 734.7 L1185.7 780.7 L1181.1 820.0 M1182.6 800.0 L1181.9 824.9 M1191.7 714.3 L1307.2 719.6 M1185.7 780.7 L1273.9 785.3 L1284.5 790.5 L1287.5 789.0 L1296.6 789.8 L1306.4 794.3 M1298.8 652.1 L1299.6 670.6 L1303.4 685.6 L1304.1 700.7 L1307.9 711.3 L1307.2 719.6 L1303.4 727.2 L1307.2 732.4 L1310.2 734.7 L1310.9 774.7 L1307.2 780.7 L1309.4 783.8 L1306.4 794.3 L1311.7 806.4 L1316.2 815.4 M1310.2 800.0 L1313.9 809.1 L1317.7 837.7 L1322.2 843.8 L1326.8 853.6 L1331.3 857.4 L1337.3 863.4 L1341.1 892.1 L1340.4 922.3 L1341.9 932.8 L1344.9 952.4 L1344.9 996.2 L1352.4 1000.7 L1353.9 1013.6 M1310.9 774.7 L1393.2 772.4 M1375.1 700.7 L1375.1 712.8 L1370.5 717.3 L1361.5 724.9 L1360.0 730.9 L1367.5 743.0 L1379.6 752.8 L1388.7 761.1 L1393.2 772.4 L1397.0 779.2 L1396.2 788.3 L1403.7 794.3 M1403.7 794.3 L1452.0 792.8 M1406.8 705.3 L1430.9 712.8 L1440.0 715.8 L1446.0 724.9 L1450.5 732.4 M1213.6 851.3 L1326.8 853.6 M1191.7 919.2 L1190.2 929.0 L1245.3 932.5 L1243.0 975.8 L1248.3 979.6 L1255.8 980.4 L1258.9 984.1 L1269.4 987.9 L1280.0 990.2 L1298.1 992.4 L1314.7 993.2 L1331.3 991.7 L1338.8 996.2 L1352.4 1000.7 M1190.2 929.0 L1182.6 1030.9 L1120.0 1024.9 M1319.2 840.8 L1390.2 838.5 L1393.2 842.3 L1399.2 834.7 M1403.7 794.3 L1409.0 804.5 L1406.8 816.6 L1402.2 825.7 L1399.2 834.7 L1393.2 845.3 L1396.2 857.4 L1403.7 864.9 L1420.3 893.6 L1430.9 905.6 L1431.7 911.7 L1436.9 917.7 L1438.5 925.3 L1433.9 928.3 L1428.6 941.9 L1421.9 964.5 L1411.3 982.6 L1405.3 997.7 L1408.3 1002.2 L1406.8 1011.3 L1402.2 1020.4 L1400.7 1031.7 L1436.9 1030.9 L1438.5 1040.0 M1341.9 932.8 L1421.9 930.6 L1423.4 934.3 L1418.1 941.9 L1428.6 941.9 M1438.5 925.3 L1440.0 916.2 L1450.5 908.7 L1456.6 898.1 L1464.1 893.6 M1459.6 792.5 L1461.1 845.3 L1458.1 887.5 L1456.6 896.6 M1438.5 928.3 L1470.0 923.8 M1450.0 928.3 L1459.1 925.3 L1534.5 917.7 L1570.7 914.0 L1661.3 898.1 L1676.4 896.6 M1353.9 1013.6 L1406.8 1010.5 M1426.4 964.5 L1470.0 962.2 M1450.0 963.0 L1530.0 956.2 L1548.1 954.7 L1570.7 950.9 L1600.9 948.7 L1613.0 947.2 L1637.2 963.8 M1460.6 963.8 L1461.3 1040.0 M1459.8 1032.1 L1462.1 1054.7 M1353.9 1034.3 L1355.4 1036.6 L1358.5 1042.6 L1363.7 1053.2 L1363.0 1063.8 L1360.7 1071.3 L1361.5 1080.4 L1359.2 1085.7 M1438.5 1063.8 L1440.0 1083.4 M1575.3 836.2 L1569.2 848.3 L1561.7 852.8 L1555.6 863.4 L1549.6 872.4 L1550.4 880.0 L1561.7 892.1 L1575.3 896.6 L1585.8 890.6 L1600.9 867.9 L1607.0 860.4 L1617.5 845.3 M1561.7 892.1 L1534.5 917.7 M1570.7 914.0 L1561.7 925.3 L1546.6 935.8 L1534.5 944.9 L1530.0 952.4 L1530.0 956.2 M1548.1 954.7 L1558.7 964.5 L1570.7 978.1 L1585.8 991.7 L1594.9 1005.3 L1600.9 1014.3 M1506.6 958.5 L1519.4 1011.3 L1524.0 1026.4 L1525.5 1040.0 M1522.4 1026.0 L1524.7 1039.6 L1527.0 1046.4 L1530.7 1052.4 L1581.3 1048.7 L1585.8 1049.4 L1594.9 1038.1 M1480.2 1063.8 L1477.9 1051.7 L1527.0 1046.4 M1459.8 825.7 L1461.3 863.4 L1463.6 875.5 L1457.5 889.0 M1599.4 836.2 L1600.2 847.5 L1610.0 837.7 L1617.5 834.7 L1617.5 845.3 M1585.1 786.0 L1656.8 771.7 L1660.5 776.2 M1673.4 699.2 L1676.4 711.3 L1679.4 723.4 L1684.7 735.5 L1687.7 744.5 L1690.0 761.1 M1701.3 692.4 L1703.6 699.2 L1697.5 708.3 L1698.3 715.8 L1696.0 729.4 L1697.5 740.0 L1697.5 743.8 M1708.1 684.1 L1723.2 724.9 M1687.7 744.5 L1706.6 742.2" fill="none" stroke="#fff" stroke-width="1.600" stroke-linejoin="round" stroke-linecap="round"/></g>
<g fill="#2a3f5f" fill-opacity="0.5">
<circle cx="851.9" cy="839.2" r="40.0"/>
<circle cx="1451.5" cy="1066.8" r="37.4"/>
<circle cx="1695.3" cy="781.5" r="35.9"/>
<circle cx="1599.9" cy="892.4" r="35.5"/>
<circle cx="1456.6" cy="807.5" r="34.0"/>
<circle cx="993.8" cy="738.5" r="33.2"/>
<circle cx="1122.0" cy="709.0" r="30.9"/>
<circle cx="882.1" cy="926.0" r="30.9"/>
<circle cx="1015.9" cy="1011.3" r="30.9"/>
<circle cx="1516.4" cy="862.6" r="30.9"/>
<circle cx="1687.0" cy="791.3" r="30.2"/>
<circle cx="1649.2" cy="833.2" r="30.2"/>
<circle cx="1293.6" cy="1018.8" r="29.9"/>
<circle cx="1291.0" cy="955.5" r="28.4"/>
<circle cx="1347.9" cy="1003.8" r="28.4"/>
<circle cx="1662.8" cy="828.7" r="27.9"/>
<circle cx="1060.6" cy="757.6" r="26.6"/>
<circle cx="919.0" cy="626.0" r="26.4"/>
<circle cx="1163.8" cy="848.3" r="26.4"/>
<circle cx="1164.8" cy="887.5" r="26.4"/>
<circle cx="1487.4" cy="993.2" r="26.4"/>
<circle cx="1690.0" cy="786.8" r="25.7"/>
<circle cx="1688.5" cy="788.3" r="24.9"/>
<circle cx="1301.1" cy="1018.8" r="24.9"/>
<circle cx="1644.7" cy="842.3" r="24.9"/>
<circle cx="1119.3" cy="1031.2" r="24.5"/>
<circle cx="1377.0" cy="699.2" r="24.1"/>
<circle cx="1557.2" cy="801.9" r="24.1"/>
<circle cx="905.9" cy="947.2" r="24.1"/>
<circle cx="1628.8" cy="921.5" r="24.1"/>
<circle cx="1533.5" cy="931.6" r="24.1"/>
<circle cx="1533.0" cy="983.4" r="24.1"/>
<circle cx="1624.3" cy="1102.3" r="24.1"/>
<circle cx="900.9" cy="671.3" r="23.8"/>
<circle cx="971.9" cy="906.0" r="23.8"/>
<circle cx="1417.0" cy="882.3" r="23.8"/>
<circle cx="1341.1" cy="877.3" r="23.8"/>
<circle cx="1520.9" cy="886.8" r="23.8"/>
<circle cx="1412.0" cy="1068.3" r="23.8"/>
<circle cx="922.4" cy="620.8" r="22.6"/>
<circle cx="1691.5" cy="783.8" r="22.6"/>
<circle cx="1299.6" cy="1017.3" r="22.6"/>
<circle cx="1302.6" cy="1020.4" r="22.6"/>
<circle cx="1643.2" cy="840.8" r="22.6"/>
<circle cx="1668.8" cy="809.1" r="22.6"/>
<circle cx="1119.8" cy="1031.7" r="22.6"/>
<circle cx="1687.0" cy="791.3" r="22.6"/>
<circle cx="1644.7" cy="842.3" r="22.6"/>
<circle cx="1299.6" cy="1018.1" r="22.6"/>
<circle cx="1678.7" cy="796.4" r="22.0"/>
<circle cx="1338.8" cy="728.7" r="21.9"/>
<circle cx="1615.6" cy="752.8" r="21.9"/>
<circle cx="1163.3" cy="835.5" r="21.9"/>
<circle cx="1383.8" cy="972.8" r="21.9"/>
<circle cx="1480.2" cy="864.9" r="21.9"/>
<circle cx="1525.0" cy="842.3" r="21.9"/>
<circle cx="1638.4" cy="1147.5" r="21.9"/>
<circle cx="1326.8" cy="1089.4" r="21.9"/>
<circle cx="1264.6" cy="1087.6" r="21.6"/>
<circle cx="1724.7" cy="746.8" r="21.1"/>
<circle cx="1685.4" cy="794.3" r="21.1"/>
<circle cx="1503.6" cy="782.2" r="21.1"/>
<circle cx="1455.1" cy="806.0" r="21.1"/>
<circle cx="1426.4" cy="1024.9" r="21.1"/>
<circle cx="1643.9" cy="843.0" r="20.4"/>
<circle cx="1300.4" cy="1018.8" r="20.4"/>
<circle cx="1126.6" cy="706.8" r="19.9"/>
<circle cx="1352.4" cy="745.3" r="19.6"/>
<circle cx="857.9" cy="840.0" r="19.6"/>
<circle cx="879.0" cy="831.7" r="19.6"/>
<circle cx="928.6" cy="970.5" r="19.6"/>
<circle cx="1288.3" cy="957.7" r="19.6"/>
<circle cx="1207.5" cy="995.8" r="19.6"/>
<circle cx="1295.1" cy="1017.3" r="19.6"/>
<circle cx="1498.3" cy="884.5" r="19.6"/>
<circle cx="1643.9" cy="843.8" r="19.6"/>
<circle cx="1588.9" cy="943.4" r="19.6"/>
<circle cx="1581.0" cy="1109.8" r="19.6"/>
<circle cx="1637.9" cy="1132.4" r="19.6"/>
<circle cx="1689.2" cy="789.0" r="19.6"/>
<circle cx="1668.1" cy="807.5" r="19.6"/>
<circle cx="1492.8" cy="786.1" r="18.9"/>
<circle cx="1120.5" cy="1031.7" r="18.9"/>
<circle cx="1687.7" cy="789.8" r="18.1"/>
<circle cx="906.2" cy="945.6" r="18.1"/>
<circle cx="1120.5" cy="1031.7" r="18.1"/>
<circle cx="1670.4" cy="806.0" r="18.1"/>
<circle cx="856.4" cy="840.8" r="18.1"/>
<circle cx="1644.7" cy="841.5" r="18.1"/>
<circle cx="1301.1" cy="1018.8" r="18.1"/>
<circle cx="1725.0" cy="746.8" r="17.8"/>
<circle cx="1283.0" cy="1074.3" r="17.8"/>
<circle cx="913.8" cy="812.1" r="17.4"/>
<circle cx="953.5" cy="933.1" r="17.4"/>
<circle cx="1049.6" cy="815.1" r="17.4"/>
<circle cx="1290.5" cy="906.4" r="17.4"/>
<circle cx="1600.9" cy="918.5" r="17.4"/>
<circle cx="1531.5" cy="978.8" r="17.4"/>
<circle cx="1607.7" cy="1090.6" r="17.4"/>
<circle cx="1636.4" cy="1151.3" r="17.4"/>
<circle cx="1327.5" cy="1083.4" r="17.4"/>
<circle cx="1675.9" cy="752.8" r="17.1"/>
<circle cx="1355.4" cy="816.6" r="17.1"/>
<circle cx="1406.8" cy="815.1" r="17.1"/>
<circle cx="1341.1" cy="1020.4" r="17.1"/>
<circle cx="1485.5" cy="850.6" r="17.1"/>
<circle cx="1586.6" cy="821.1" r="17.1"/>
<circle cx="1560.2" cy="935.8" r="17.1"/>
<circle cx="1365.3" cy="739.2" r="16.9"/>
<circle cx="1357.7" cy="740.0" r="16.9"/>
<circle cx="905.5" cy="670.6" r="16.6"/>
<circle cx="1502.8" cy="784.5" r="16.6"/>
<circle cx="1499.1" cy="885.3" r="16.6"/>
<circle cx="874.5" cy="830.2" r="16.6"/>
<circle cx="906.2" cy="946.4" r="16.6"/>
<circle cx="1166.8" cy="874.0" r="16.3"/>
<circle cx="1672.0" cy="806.0" r="16.0"/>
<circle cx="907.7" cy="947.9" r="15.8"/>
<circle cx="1499.1" cy="818.1" r="15.8"/>
<circle cx="1638.7" cy="1136.2" r="15.8"/>
<circle cx="1723.2" cy="746.8" r="15.8"/>
<circle cx="1295.5" cy="674.8" r="15.1"/>
<circle cx="1358.5" cy="740.7" r="15.1"/>
<circle cx="1454.3" cy="779.2" r="15.1"/>
<circle cx="1722.4" cy="746.0" r="15.1"/>
<circle cx="875.3" cy="825.7" r="15.1"/>
<circle cx="1425.6" cy="856.6" r="15.1"/>
<circle cx="1498.3" cy="884.5" r="15.1"/>
<circle cx="1642.1" cy="878.5" r="15.1"/>
<circle cx="1622.1" cy="916.2" r="15.1"/>
<circle cx="1590.1" cy="1124.9" r="15.1"/>
<circle cx="1637.9" cy="1140.7" r="15.1"/>
<circle cx="1327.5" cy="1084.1" r="15.1"/>
<circle cx="1120.2" cy="1032.1" r="15.1"/>
<circle cx="1646.2" cy="839.2" r="15.1"/>
<circle cx="1424.1" cy="780.7" r="14.8"/>
<circle cx="1638.7" cy="751.8" r="14.8"/>
<circle cx="1387.9" cy="807.5" r="14.8"/>
<circle cx="1245.3" cy="1024.9" r="14.8"/>
<circle cx="1665.8" cy="889.0" r="14.8"/>
<circle cx="1564.0" cy="953.9" r="14.8"/>
<circle cx="1490.0" cy="965.0" r="14.8"/>
<circle cx="1524.7" cy="1012.1" r="14.8"/>
<circle cx="1267.2" cy="1093.2" r="14.8"/>
<circle cx="906.2" cy="669.8" r="14.3"/>
<circle cx="876.8" cy="830.2" r="14.3"/>
<circle cx="904.7" cy="949.4" r="14.3"/>
<circle cx="971.1" cy="905.6" r="14.3"/>
<circle cx="974.1" cy="907.9" r="14.3"/>
<circle cx="1512.6" cy="861.9" r="14.3"/>
<circle cx="1602.4" cy="917.7" r="14.3"/>
<circle cx="907.0" cy="947.2" r="14.3"/>
<circle cx="1503.1" cy="783.8" r="14.3"/>
<circle cx="1498.6" cy="884.8" r="14.3"/>
<circle cx="1637.2" cy="1145.3" r="14.3"/>
<circle cx="1357.9" cy="740.1" r="14.3"/>
<circle cx="1661.4" cy="820.5" r="14.0"/>
<circle cx="1357.3" cy="739.7" r="13.9"/>
<circle cx="1582.8" cy="815.4" r="13.6"/>
<circle cx="1637.2" cy="1143.8" r="13.6"/>
<circle cx="860.9" cy="843.8" r="13.6"/>
<circle cx="1327.7" cy="1084.6" r="13.6"/>
<circle cx="1023.6" cy="982.6" r="13.3"/>
<circle cx="1499.1" cy="818.1" r="13.3"/>
<circle cx="1482.4" cy="849.7" r="13.0"/>
<circle cx="919.0" cy="628.3" r="12.8"/>
<circle cx="1528.5" cy="789.0" r="12.8"/>
<circle cx="862.4" cy="851.3" r="12.8"/>
<circle cx="1121.7" cy="955.8" r="12.8"/>
<circle cx="1119.8" cy="1033.2" r="12.8"/>
<circle cx="1384.1" cy="878.2" r="12.8"/>
<circle cx="1342.9" cy="878.5" r="12.8"/>
<circle cx="1481.7" cy="852.8" r="12.8"/>
<circle cx="1559.4" cy="809.1" r="12.8"/>
<circle cx="1644.7" cy="818.1" r="12.8"/>
<circle cx="1592.6" cy="940.4" r="12.8"/>
<circle cx="1267.9" cy="1093.2" r="12.8"/>
<circle cx="1287.2" cy="1130.9" r="12.8"/>
<circle cx="1435.4" cy="1076.6" r="12.8"/>
<circle cx="879.0" cy="830.2" r="12.8"/>
<circle cx="921.3" cy="632.1" r="12.5"/>
<circle cx="904.0" cy="827.5" r="12.5"/>
<circle cx="898.4" cy="875.9" r="12.5"/>
<circle cx="1014.9" cy="975.1" r="12.5"/>
<circle cx="1317.7" cy="824.9" r="12.5"/>
<circle cx="1424.6" cy="834.0" r="12.5"/>
<circle cx="1209.3" cy="955.5" r="12.5"/>
<circle cx="1390.6" cy="1023.1" r="12.5"/>
<circle cx="1593.1" cy="1052.1" r="12.5"/>
<circle cx="1555.6" cy="801.1" r="12.1"/>
<circle cx="1558.7" cy="810.9" r="12.1"/>
<circle cx="926.6" cy="943.4" r="12.1"/>
<circle cx="1050.3" cy="815.1" r="12.1"/>
<circle cx="1172.8" cy="852.8" r="12.1"/>
<circle cx="1163.0" cy="874.0" r="12.1"/>
<circle cx="1287.5" cy="954.7" r="12.1"/>
<circle cx="1639.4" cy="815.1" r="12.1"/>
<circle cx="1635.6" cy="1149.8" r="12.1"/>
<circle cx="862.4" cy="849.8" r="12.1"/>
<circle cx="868.5" cy="836.2" r="12.1"/>
<circle cx="905.5" cy="945.6" r="12.1"/>
<circle cx="1723.2" cy="746.8" r="12.1"/>
<circle cx="1498.6" cy="884.8" r="12.1"/>
<circle cx="1636.8" cy="1148.3" r="12.1"/>
<circle cx="1357.9" cy="740.1" r="12.1"/>
<circle cx="1573.8" cy="801.9" r="11.3"/>
<circle cx="860.9" cy="845.3" r="11.3"/>
<circle cx="877.5" cy="829.4" r="11.3"/>
<circle cx="1425.6" cy="855.8" r="11.3"/>
<circle cx="1289.0" cy="958.5" r="11.3"/>
<circle cx="1331.3" cy="1024.9" r="11.3"/>
<circle cx="1328.3" cy="1084.9" r="11.3"/>
<circle cx="1601.2" cy="915.1" r="11.0"/>
<circle cx="1416.6" cy="882.6" r="10.9"/>
<circle cx="1209.3" cy="955.5" r="10.9"/>
<circle cx="1586.6" cy="820.4" r="10.9"/>
<circle cx="1584.0" cy="1109.0" r="10.9"/>
<circle cx="918.3" cy="625.3" r="10.6"/>
<circle cx="939.4" cy="655.5" r="10.6"/>
<circle cx="1455.1" cy="806.4" r="10.6"/>
<circle cx="1597.6" cy="761.9" r="10.6"/>
<circle cx="1632.3" cy="775.0" r="10.6"/>
<circle cx="876.3" cy="902.9" r="10.6"/>
<circle cx="921.3" cy="976.6" r="10.6"/>
<circle cx="975.6" cy="908.7" r="10.6"/>
<circle cx="1015.6" cy="981.1" r="10.6"/>
<circle cx="1455.1" cy="806.0" r="10.6"/>
<circle cx="1291.3" cy="905.6" r="10.6"/>
<circle cx="1208.3" cy="996.2" r="10.6"/>
<circle cx="1642.4" cy="877.7" r="10.6"/>
<circle cx="1618.7" cy="990.9" r="10.6"/>
<circle cx="1485.0" cy="992.4" r="10.6"/>
<circle cx="1473.4" cy="999.2" r="10.6"/>
<circle cx="1467.7" cy="1060.0" r="10.6"/>
<circle cx="1485.8" cy="1063.0" r="10.6"/>
<circle cx="1591.9" cy="1052.1" r="10.6"/>
<circle cx="1282.2" cy="1072.8" r="10.6"/>
<circle cx="1557.9" cy="806.4" r="10.6"/>
<circle cx="1602.4" cy="918.0" r="10.6"/>
<circle cx="1637.5" cy="1142.3" r="10.6"/>
<circle cx="1327.7" cy="1084.6" r="10.6"/>
<circle cx="1558.2" cy="808.4" r="10.3"/>
<circle cx="1639.7" cy="751.3" r="10.3"/>
<circle cx="897.9" cy="912.0" r="10.3"/>
<circle cx="1166.8" cy="890.6" r="10.3"/>
<circle cx="1315.5" cy="824.9" r="10.3"/>
<circle cx="1320.0" cy="876.2" r="10.3"/>
<circle cx="1422.6" cy="1025.2" r="10.3"/>
<circle cx="1454.3" cy="1020.4" r="10.3"/>
<circle cx="1477.9" cy="809.1" r="10.3"/>
<circle cx="1599.9" cy="892.1" r="10.3"/>
<circle cx="1556.4" cy="914.7" r="10.3"/>
<circle cx="1526.2" cy="1012.1" r="10.3"/>
<circle cx="1501.6" cy="1021.1" r="10.3"/>
<circle cx="1310.2" cy="1066.0" r="10.3"/>
<circle cx="1392.4" cy="1074.6" r="10.3"/>
<circle cx="1525.5" cy="788.3" r="9.8"/>
<circle cx="852.6" cy="842.3" r="9.8"/>
<circle cx="897.9" cy="875.5" r="9.8"/>
<circle cx="1455.3" cy="806.8" r="9.8"/>
<circle cx="1499.1" cy="818.4" r="9.8"/>
<circle cx="1592.6" cy="939.6" r="9.8"/>
<circle cx="1499.7" cy="817.0" r="9.5"/>
<circle cx="1342.2" cy="873.8" r="9.5"/>
<circle cx="1722.9" cy="747.2" r="9.4"/>
<circle cx="1338.1" cy="869.4" r="9.4"/>
<circle cx="1020.9" cy="975.8" r="9.1"/>
<circle cx="1416.6" cy="882.6" r="9.1"/>
<circle cx="1342.6" cy="875.5" r="9.1"/>
<circle cx="861.7" cy="846.8" r="9.1"/>
<circle cx="877.5" cy="828.7" r="9.1"/>
<circle cx="974.9" cy="908.7" r="9.1"/>
<circle cx="1586.6" cy="820.7" r="9.1"/>
<circle cx="1455.4" cy="806.3" r="9.1"/>
<circle cx="1417.0" cy="881.6" r="9.0"/>
<circle cx="1525.0" cy="786.0" r="9.0"/>
<circle cx="1448.3" cy="779.2" r="8.8"/>
<circle cx="1316.4" cy="823.9" r="8.5"/>
<circle cx="1448.0" cy="779.2" r="8.5"/>
<circle cx="989.7" cy="740.7" r="8.3"/>
<circle cx="1613.5" cy="750.8" r="8.3"/>
<circle cx="1675.6" cy="748.7" r="8.3"/>
<circle cx="1701.3" cy="764.9" r="8.3"/>
<circle cx="1522.1" cy="803.1" r="8.3"/>
<circle cx="923.6" cy="972.1" r="8.3"/>
<circle cx="1050.3" cy="815.1" r="8.3"/>
<circle cx="1099.1" cy="860.1" r="8.3"/>
<circle cx="1119.8" cy="1033.9" r="8.3"/>
<circle cx="1160.8" cy="853.6" r="8.3"/>
<circle cx="1294.0" cy="909.7" r="8.3"/>
<circle cx="1359.2" cy="1021.1" r="8.3"/>
<circle cx="1348.7" cy="963.0" r="8.3"/>
<circle cx="1568.5" cy="874.0" r="8.3"/>
<circle cx="1670.4" cy="887.5" r="8.3"/>
<circle cx="1603.2" cy="917.7" r="8.3"/>
<circle cx="1560.9" cy="936.6" r="8.3"/>
<circle cx="1488.5" cy="965.3" r="8.3"/>
<circle cx="1530.0" cy="980.4" r="8.3"/>
<circle cx="1532.3" cy="981.1" r="8.3"/>
<circle cx="1485.5" cy="992.4" r="8.3"/>
<circle cx="1582.5" cy="1069.1" r="8.3"/>
<circle cx="933.7" cy="1120.8" r="8.3"/>
<circle cx="1417.0" cy="882.4" r="8.3"/>
<circle cx="1343.1" cy="876.2" r="8.3"/>
<circle cx="1499.7" cy="817.0" r="8.0"/>
<circle cx="1586.0" cy="818.8" r="8.0"/>
<circle cx="1305.3" cy="835.9" r="8.0"/>
<circle cx="1596.4" cy="765.6" r="7.8"/>
<circle cx="1517.5" cy="771.7" r="7.8"/>
<circle cx="928.9" cy="969.8" r="7.8"/>
<circle cx="1424.6" cy="834.0" r="7.8"/>
<circle cx="1555.2" cy="873.2" r="7.8"/>
<circle cx="1455.8" cy="806.4" r="7.5"/>
<circle cx="975.6" cy="909.4" r="7.5"/>
<circle cx="1172.8" cy="853.6" r="7.5"/>
<circle cx="1522.1" cy="804.5" r="7.5"/>
<circle cx="1586.6" cy="820.4" r="7.5"/>
<circle cx="897.9" cy="875.5" r="7.5"/>
<circle cx="1315.8" cy="825.2" r="7.5"/>
<circle cx="1593.4" cy="938.9" r="7.2"/>
<circle cx="1017.9" cy="978.8" r="6.8"/>
<circle cx="1163.0" cy="852.8" r="6.8"/>
<circle cx="1671.1" cy="888.3" r="6.8"/>
<circle cx="1584.3" cy="1107.5" r="6.8"/>
<circle cx="905.0" cy="669.0" r="6.3"/>
<circle cx="989.7" cy="740.7" r="6.3"/>
<circle cx="1436.2" cy="853.1" r="6.3"/>
<circle cx="1316.5" cy="940.7" r="6.3"/>
<circle cx="1582.5" cy="1069.1" r="6.3"/>
<circle cx="1588.1" cy="1118.9" r="6.3"/>
<circle cx="991.9" cy="644.6" r="6.0"/>
<circle cx="1297.6" cy="697.4" r="6.0"/>
<circle cx="1304.7" cy="774.2" r="6.0"/>
<circle cx="1595.6" cy="766.4" r="6.0"/>
<circle cx="1524.0" cy="801.9" r="6.0"/>
<circle cx="1052.9" cy="828.7" r="6.0"/>
<circle cx="1121.7" cy="955.8" r="6.0"/>
<circle cx="1166.0" cy="874.7" r="6.0"/>
<circle cx="1315.9" cy="825.7" r="6.0"/>
<circle cx="1357.0" cy="818.4" r="6.0"/>
<circle cx="1294.3" cy="907.9" r="6.0"/>
<circle cx="1209.3" cy="955.5" r="6.0"/>
<circle cx="1382.9" cy="972.1" r="6.0"/>
<circle cx="1628.8" cy="920.7" r="6.0"/>
<circle cx="1623.6" cy="912.4" r="6.0"/>
<circle cx="1593.8" cy="968.3" r="6.0"/>
<circle cx="1526.2" cy="1012.5" r="6.0"/>
<circle cx="1501.6" cy="1021.1" r="6.0"/>
<circle cx="1467.7" cy="1060.0" r="6.0"/>
<circle cx="1599.4" cy="1052.4" r="6.0"/>
<circle cx="1601.4" cy="1135.0" r="6.0"/>
<circle cx="1281.9" cy="1054.4" r="6.0"/>
<circle cx="1161.1" cy="853.6" r="6.0"/>
<circle cx="1424.8" cy="833.4" r="6.0"/>
<circle cx="1523.8" cy="802.4" r="6.0"/>
<circle cx="920.7" cy="792.5" r="5.7"/>
<circle cx="1429.4" cy="797.3" r="5.7"/>
<circle cx="1639.7" cy="751.3" r="5.7"/>
<circle cx="1651.5" cy="791.0" r="5.7"/>
<circle cx="1579.3" cy="782.2" r="5.7"/>
<circle cx="1424.6" cy="834.4" r="5.7"/>
<circle cx="1436.2" cy="839.2" r="5.7"/>
<circle cx="1382.2" cy="886.0" r="5.7"/>
<circle cx="1426.4" cy="959.7" r="5.7"/>
<circle cx="1524.0" cy="803.8" r="5.7"/>
<circle cx="1544.3" cy="820.4" r="5.7"/>
<circle cx="1605.5" cy="820.4" r="5.7"/>
<circle cx="1612.5" cy="886.3" r="5.7"/>
<circle cx="1592.6" cy="1052.4" r="5.7"/>
<circle cx="1353.5" cy="1080.4" r="5.7"/>
<circle cx="902.9" cy="910.9" r="5.6"/>
<circle cx="1135.6" cy="946.1" r="5.6"/>
<circle cx="1316.2" cy="941.1" r="5.4"/>
<circle cx="897.2" cy="875.0" r="5.3"/>
<circle cx="1358.5" cy="1021.9" r="5.3"/>
<circle cx="1362.2" cy="1028.7" r="4.5"/>
</g></svg>
<svg class="i" style="left:1946.3px;top:220px" width="74.6" height="79.1" viewBox="0 0 100 106" fill="none" stroke-linejoin="round" stroke-linecap="round" stroke-width="6.2">
<path d="M36.500 9.500 Q50 -2.500 63.500 9.500 L82 36 Q90 51 78 61 L22 61 Q10 51 18 36 Z" stroke="#17303f"/>
<path d="M38 25 Q50 13 62 25 L87 60 Q96 74 84 83 L16 83 Q4 74 13 60 Z" stroke="#2f6a70"/>
<path d="M44.500 39 Q50 31 55.500 39 L95 93 Q99 102 90 102 L10 102 Q1 102 5 93 Z" stroke="#5fd0bd"/>
</svg>
<svg class="i" style="left:2052.800px;top:228px" width="24" height="22" viewBox="0 0 24 22" fill="none" stroke="#bdbdbd" stroke-width="1.700" stroke-linecap="round">
<path d="M5.800 20.900 A10.800 10.800 0 1 1 18.200 20.900 Z" stroke-linejoin="round"/><path d="M11.500 13 L15.200 8.600" stroke-width="2"/><circle cx="11.600" cy="13" r="1.500" fill="#bdbdbd" stroke="none"/>
<path d="M12 3.600v1.600M6.200 5.900l1.100 1.100M17.800 5.900l-1.100 1.100M3.800 11.500h1.600M18.600 11.500h1.600" stroke-width="1.300"/></svg>
<div id="t21" class="t " style="left:2087.5px;top:228.1px;font-size:23.5px;color:#595959;">Dashboard</div>
<div id="t22" class="t " style="left:2052.7px;top:267.8px;font-size:31px;color:#262626;font-weight:700;">Available Pets</div>
<div id="t23" class="t " style="left:2276.8px;top:277.1px;font-size:20px;color:#4fa89c;font-weight:700;">view in DataHub</div>
<svg class="i" style="left:2431px;top:277.500px" width="20" height="18" viewBox="0 0 20 18" fill="none" stroke="#4fa89c" stroke-width="2" stroke-linecap="round" stroke-linejoin="round"><path d="M2 9 H17.500 M11 2.500 L17.500 9 L11 15.500"/></svg>
<div class="pl" style="left:1946px;top:341px;width:892px"></div>
<div class="a" style="left:1946.300px;top:386px;width:27.400px;height:27.400px;border-radius:50%;background:#5a9e2f"></div>
<svg class="i" style="left:1952px;top:392.500px" width="16" height="14" viewBox="0 0 16 14" fill="none" stroke="#fff" stroke-width="2.300" stroke-linecap="round" stroke-linejoin="round"><path d="M2.800 7.500 L6.300 11 L13.200 3.500"/></svg>
<div id="t24" class="t " style="left:1991.2px;top:384.1px;font-size:31.5px;color:#262626;">All data inputs are healthy</div>
<div class="pl" style="left:1946px;top:454.500px;width:892px"></div>
<div id="t25" class="t " style="left:1946.0px;top:508.8px;font-size:28px;color:#262626;font-weight:700;">About</div>
<div id="t26" class="t " style="left:1946.0px;top:576.7px;font-size:27.5px;color:#262626;">This dashboard shows where pets are available across the country</div>
<div id="t27" class="t " style="left:1946.0px;top:618.9px;font-size:27.5px;color:#262626;">by region. Adoptable pets are more densely packed on the east</div>
<div id="t28" class="t " style="left:1946.0px;top:661.0px;font-size:27.5px;color:#262626;">coast as you can see.</div>
<div class="pl" style="left:1946px;top:726.500px;width:892px"></div>
<div id="t29" class="t " style="left:1946.0px;top:780.5px;font-size:28px;color:#262626;font-weight:700;">Owners</div>
<div class="pill" style="left:1946.300px;top:841.200px;width:162.200px;height:59.200px"></div>
<div class="a" style="left:1952px;top:847px;width:47.600px;height:47.600px;border-radius:50%;background:#9ee3dc"></div>
<div id="t30" class="t " style="left:1969.0px;top:856.0px;font-size:29px;color:#ffffff;">J</div>
<div id="t31" class="t " style="left:2008.1px;top:860.5px;font-size:20.5px;color:#595959;">John Doe</div>
<div class="pill" style="left:2125.400px;top:841.200px;width:161.800px;height:59.200px"></div>
<svg class="i" style="left:2131.200px;top:847px" width="47.600" height="47.600" viewBox="0 0 48 48"><defs><clipPath id="avc"><circle cx="24" cy="24" r="24"/></clipPath></defs>
<circle cx="24" cy="24" r="24" fill="#c9c9c9"/><g clip-path="url(#avc)" fill="#f3f3f3"><path d="M24 6.500 C31 6.500 34.500 11.500 34.500 18 C34.500 22 33.500 24.500 32.500 26.500 C31.800 28 32 30.500 34 32 C38 34.500 45 35 47 39.500 L47 50 L1 50 L1 39.500 C3 35 10 34.500 14 32 C16 30.500 16.200 28 15.500 26.500 C14.500 24.500 13.500 22 13.500 18 C13.500 11.500 17 6.500 24 6.500 Z"/></g></svg>
<div id="t32" class="t " style="left:2187.8px;top:860.5px;font-size:20.5px;color:#595959;">Data Hub</div>
<div class="pl" style="left:1946px;top:949px;width:892px"></div>
<div id="t33" class="t " style="left:1946.0px;top:1002.4px;font-size:28px;color:#262626;font-weight:700;">Tags</div>
<div class="pill" style="left:1946.300px;top:1063.600px;width:120.200px;height:42.800px"></div>
<div class="a" style="left:1961.800px;top:1076.300px;width:16px;height:16px;border-radius:50%;background:#6eecc1"></div>
<div id="t34" class="t " style="left:1984.6px;top:1074.8px;font-size:20.5px;color:#595959;">Legacy</div>
<div class="pl" style="left:1946px;top:1155.500px;width:892px"></div>
<div id="t35" class="t " style="left:1946.0px;top:1208.7px;font-size:28px;color:#262626;font-weight:700;">Glossary Terms</div>
<div class="pill" style="left:1946.300px;top:1285.500px;width:137.100px;height:42.800px"></div>
<svg class="i" style="left:1963px;top:1295px" width="18" height="22" viewBox="0 0 18 22" fill="none" stroke="#434343" stroke-width="1.800" stroke-linejoin="round"><rect x="1.500" y="1.500" width="14.800" height="19" rx="1"/><path d="M9.500 1.500 V8.500 L11.500 7 L13.500 8.500 V1.500"/></svg>
<div id="t36" class="t " style="left:1985.9px;top:1296.4px;font-size:20.5px;color:#595959;">Adoption</div>
<div class="pl" style="left:1946px;top:1376.700px;width:892px"></div>
<div id="t37" class="t " style="left:1946.0px;top:1430.9px;font-size:28px;color:#262626;font-weight:700;">Domain</div>
<div class="pill" style="left:1946.300px;top:1491.600px;width:154.300px;height:42.800px"></div>
<svg class="i" style="left:1962px;top:1504px" width="20" height="16" viewBox="0 0 20 16" fill="none" stroke="#c4c4c4" stroke-width="1.600" stroke-linejoin="round"><path d="M1.200 1.200 H7.200 L9.200 3.600 H18.800 V14.800 H1.200 Z"/></svg>
<div id="t38" class="t " style="left:1990.4px;top:1502.6px;font-size:20.5px;color:#595959;">Marketing</div>
<div class="a" style="left:1841px;top:1587px;width:73px;height:260px;border:4px solid #4fa89c;border-right:none;border-radius:24px 0 0 24px;background:#fff"></div>
<div class="a" style="left:1818px;top:1692px;width:24px;height:60px;border-radius:13px 0 0 13px;background:#4fa89c"></div>
<svg class="i" style="left:1827.500px;top:1718px" width="10" height="14" viewBox="0 0 10 14" fill="none" stroke="#fff" stroke-width="1.600" stroke-linecap="round" stroke-linejoin="round"><path d="M1.500 1.500 L8.500 7 L1.500 12.500"/></svg>
<svg class="i" style="left:1863.6px;top:1624px" width="29.6" height="31.4" viewBox="0 0 100 106" fill="none" stroke-linejoin="round" stroke-linecap="round" stroke-width="6.5">
<path d="M36.500 9.500 Q50 -2.500 63.500 9.500 L82 36 Q90 51 78 61 L22 61 Q10 51 18 36 Z" stroke="#17303f"/>
<path d="M38 25 Q50 13 62 25 L87 60 Q96 74 84 83 L16 83 Q4 74 13 60 Z" stroke="#2f6a70"/>
<path d="M44.500 39 Q50 31 55.500 39 L95 93 Q99 102 90 102 L10 102 Q1 102 5 93 Z" stroke="#5fd0bd"/>
</svg>
<div id="di" class="t" style="left:1877.200px;top:1741.700px;font-size:24px;color:#4fa89c;transform:translate(-50%,-50%) rotate(-90deg);transform-origin:50% 50%">Data Insights</div>
<div class="a" style="left:1910px;top:187px;width:4px;height:1765px;background:#4fa89c"></div>
</div></div>
</body></html>
